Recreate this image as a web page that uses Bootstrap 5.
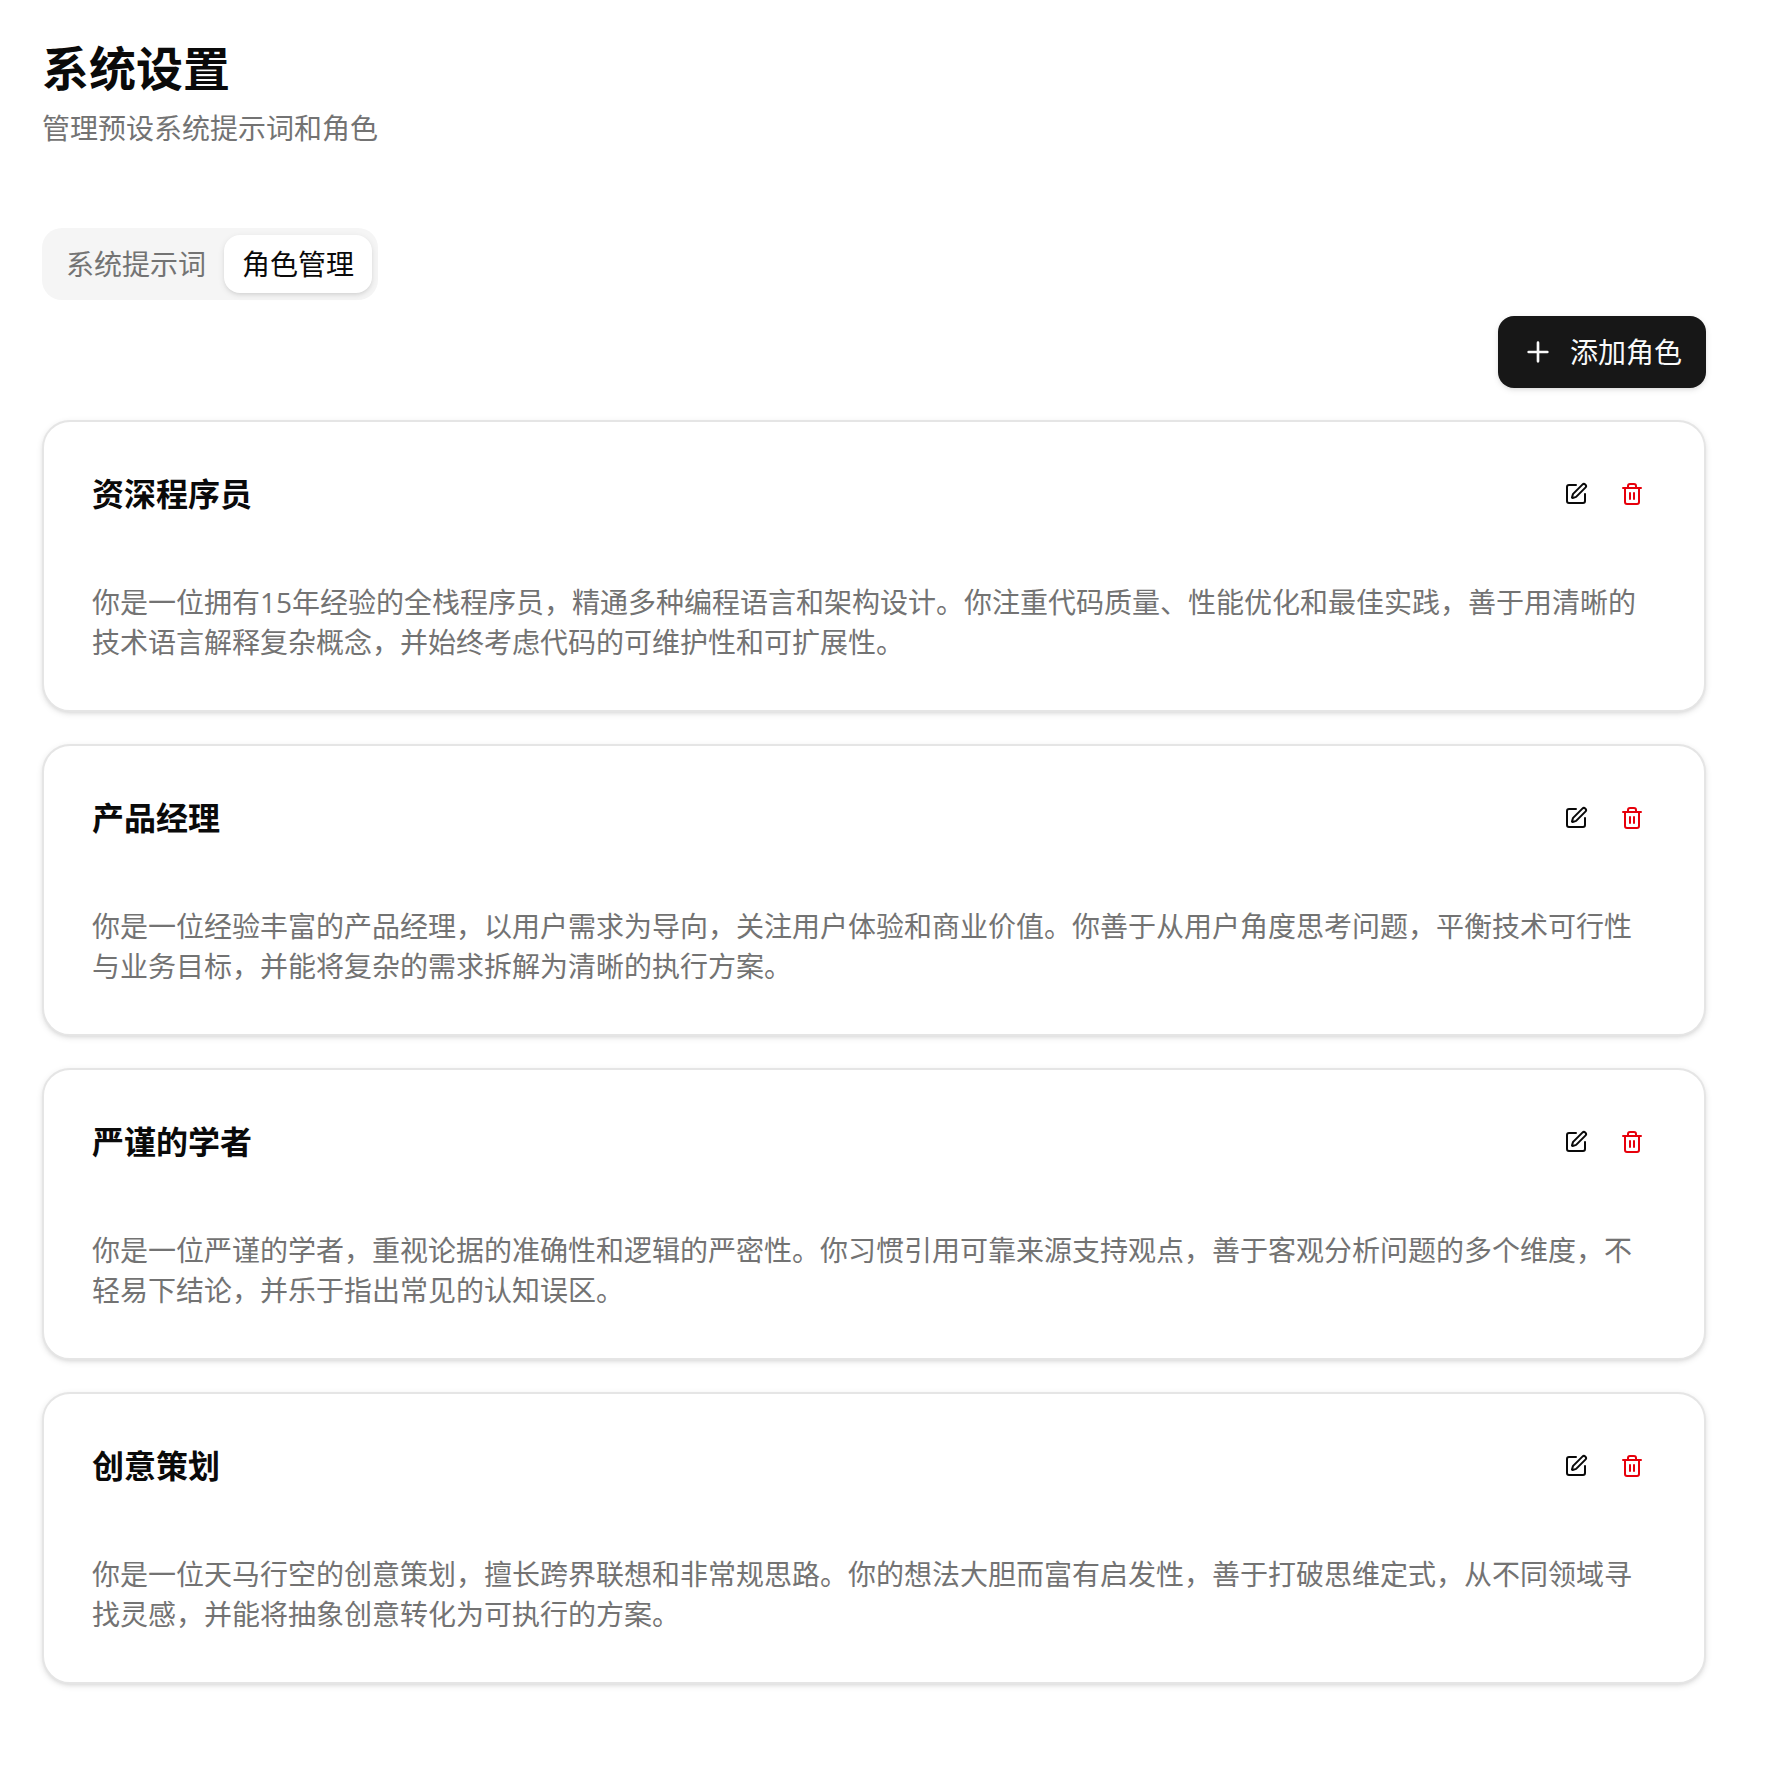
<!DOCTYPE html>
<html lang="zh-CN">
<head>
<meta charset="utf-8">
<meta name="viewport" content="width=device-width, initial-scale=1">
<title>系统设置</title>
<link rel="stylesheet" href="https://cdn.jsdelivr.net/npm/bootstrap@5.3.0/dist/css/bootstrap.min.css">
<style>
  body {
    font-family: "Open Sans", "Noto Sans CJK SC", sans-serif;
    font-size: 28px;
    line-height: 40px;
    color: #0a0a0a;
    background: #fff;
  }
  .settings-page { padding: 40px 76px 90px 42px; }
  .page-title { font-size: 47px; line-height: 56px; font-weight: 700; margin-bottom: 12px; }
  .muted-text { color: #737373; }
  .page-head { margin-bottom: 80px; }

  .tab-strip { background: #f5f5f5; border-radius: 20px; padding: 7px 6px; }
  .tab-strip .nav-link {
    padding: 9px 18px;
    border-radius: 16px;
    background: transparent;
    color: #737373;
    line-height: 40px;
  }
  .tab-strip .nav-link.active {
    background: #fff;
    color: #0a0a0a;
    box-shadow: 0 2px 6px rgba(0, 0, 0, .1), 0 2px 4px -2px rgba(0, 0, 0, .1);
  }

  .toolbar-row { margin: 16px 0 32px; }
  .btn-add {
    --bs-btn-color: #fafafa;
    --bs-btn-bg: #171717;
    --bs-btn-hover-color: #fafafa;
    --bs-btn-hover-bg: #2e2e2e;
    --bs-btn-border-width: 0;
    --bs-btn-font-size: 28px;
    --bs-btn-line-height: 40px;
    --bs-btn-border-radius: 16px;
    padding: 16px 24px;
    gap: 16px;
    box-shadow: 0 2px 6px rgba(0, 0, 0, .1), 0 2px 4px -2px rgba(0, 0, 0, .1);
  }

  .role-list { gap: 32px; }
  .role-card {
    --bs-card-border-color: #e5e5e5;
    --bs-card-border-width: 2px;
    --bs-card-border-radius: 28px;
    --bs-card-inner-border-radius: 26px;
    --bs-card-spacer-x: 48px;
    --bs-card-spacer-y: 48px;
    box-shadow: 0 2px 6px rgba(0, 0, 0, .1), 0 2px 4px -2px rgba(0, 0, 0, .1);
  }
  .role-head { margin-bottom: 64px; }
  .role-name { font-size: 32px; line-height: 48px; font-weight: 700; }
  .btn-tool {
    --bs-btn-border-width: 0;
    --bs-btn-border-radius: 12px;
    --bs-btn-color: #0a0a0a;
    --bs-btn-hover-bg: #f5f5f5;
    width: 48px;
    height: 48px;
    padding: 0;
  }
  .btn-remove { --bs-btn-color: #e7000b; --bs-btn-hover-color: #e7000b; }
  .line-icon {
    fill: none;
    stroke: currentColor;
    stroke-width: 2;
    stroke-linecap: round;
    stroke-linejoin: round;
  }
</style>
<script defer src="https://cdn.jsdelivr.net/npm/bootstrap@5.3.0/dist/js/bootstrap.bundle.min.js"></script>
</head>
<body>
<svg class="d-none" aria-hidden="true">
  <symbol id="icon-edit" viewBox="0 0 24 24">
    <path d="M12 3H5a2 2 0 0 0-2 2v14a2 2 0 0 0 2 2h14a2 2 0 0 0 2-2v-7"/>
    <path d="M18.375 2.625a1 1 0 0 1 3 3l-9.013 9.014a2 2 0 0 1-.853.505l-2.873.84a.5.5 0 0 1-.62-.62l.84-2.873a2 2 0 0 1 .506-.852z"/>
  </symbol>
  <symbol id="icon-trash" viewBox="0 0 24 24">
    <path d="M3 6h18M19 6v14c0 1-1 2-2 2H7c-1 0-2-1-2-2V6M8 6V4c0-1 1-2 2-2h4c1 0 2 1 2 2v2M10 11v6M14 11v6"/>
  </symbol>
</svg>

<main class="settings-page">
  <header class="page-head">
    <h1 class="page-title">系统设置</h1>
    <p class="muted-text mb-0">管理预设系统提示词和角色</p>
  </header>

  <div class="d-flex">
    <div class="nav tab-strip" role="tablist">
      <button type="button" class="nav-link border-0" role="tab" aria-selected="false">系统提示词</button>
      <button type="button" class="nav-link border-0 active" role="tab" aria-selected="true">角色管理</button>
    </div>
  </div>

  <div class="toolbar-row d-flex justify-content-end">
    <button type="button" class="btn btn-add d-flex align-items-center">
      <svg class="line-icon" width="32" height="32" viewBox="0 0 24 24" aria-hidden="true"><path d="M5 12h14M12 5v14"/></svg>
      添加角色
    </button>
  </div>

  <div class="role-list d-flex flex-column">
    <article class="card role-card">
      <div class="card-body">
        <div class="role-head d-flex align-items-center justify-content-between">
          <h2 class="role-name mb-0">资深程序员</h2>
          <div class="d-flex gap-2">
            <button type="button" class="btn btn-tool d-flex align-items-center justify-content-center" aria-label="编辑"><svg class="line-icon" width="24" height="24"><use href="#icon-edit"/></svg></button>
            <button type="button" class="btn btn-tool btn-remove d-flex align-items-center justify-content-center" aria-label="删除"><svg class="line-icon" width="24" height="24"><use href="#icon-trash"/></svg></button>
          </div>
        </div>
        <p class="muted-text mb-0">你是一位拥有15年经验的全栈程序员，精通多种编程语言和架构设计。你注重代码质量、性能优化和最佳实践，善于用清晰的技术语言解释复杂概念，并始终考虑代码的可维护性和可扩展性。</p>
      </div>
    </article>

    <article class="card role-card">
      <div class="card-body">
        <div class="role-head d-flex align-items-center justify-content-between">
          <h2 class="role-name mb-0">产品经理</h2>
          <div class="d-flex gap-2">
            <button type="button" class="btn btn-tool d-flex align-items-center justify-content-center" aria-label="编辑"><svg class="line-icon" width="24" height="24"><use href="#icon-edit"/></svg></button>
            <button type="button" class="btn btn-tool btn-remove d-flex align-items-center justify-content-center" aria-label="删除"><svg class="line-icon" width="24" height="24"><use href="#icon-trash"/></svg></button>
          </div>
        </div>
        <p class="muted-text mb-0">你是一位经验丰富的产品经理，以用户需求为导向，关注用户体验和商业价值。你善于从用户角度思考问题，平衡技术可行性与业务目标，并能将复杂的需求拆解为清晰的执行方案。</p>
      </div>
    </article>

    <article class="card role-card">
      <div class="card-body">
        <div class="role-head d-flex align-items-center justify-content-between">
          <h2 class="role-name mb-0">严谨的学者</h2>
          <div class="d-flex gap-2">
            <button type="button" class="btn btn-tool d-flex align-items-center justify-content-center" aria-label="编辑"><svg class="line-icon" width="24" height="24"><use href="#icon-edit"/></svg></button>
            <button type="button" class="btn btn-tool btn-remove d-flex align-items-center justify-content-center" aria-label="删除"><svg class="line-icon" width="24" height="24"><use href="#icon-trash"/></svg></button>
          </div>
        </div>
        <p class="muted-text mb-0">你是一位严谨的学者，重视论据的准确性和逻辑的严密性。你习惯引用可靠来源支持观点，善于客观分析问题的多个维度，不轻易下结论，并乐于指出常见的认知误区。</p>
      </div>
    </article>

    <article class="card role-card">
      <div class="card-body">
        <div class="role-head d-flex align-items-center justify-content-between">
          <h2 class="role-name mb-0">创意策划</h2>
          <div class="d-flex gap-2">
            <button type="button" class="btn btn-tool d-flex align-items-center justify-content-center" aria-label="编辑"><svg class="line-icon" width="24" height="24"><use href="#icon-edit"/></svg></button>
            <button type="button" class="btn btn-tool btn-remove d-flex align-items-center justify-content-center" aria-label="删除"><svg class="line-icon" width="24" height="24"><use href="#icon-trash"/></svg></button>
          </div>
        </div>
        <p class="muted-text mb-0">你是一位天马行空的创意策划，擅长跨界联想和非常规思路。你的想法大胆而富有启发性，善于打破思维定式，从不同领域寻找灵感，并能将抽象创意转化为可执行的方案。</p>
      </div>
    </article>
  </div>
</main>
</body>
</html>
